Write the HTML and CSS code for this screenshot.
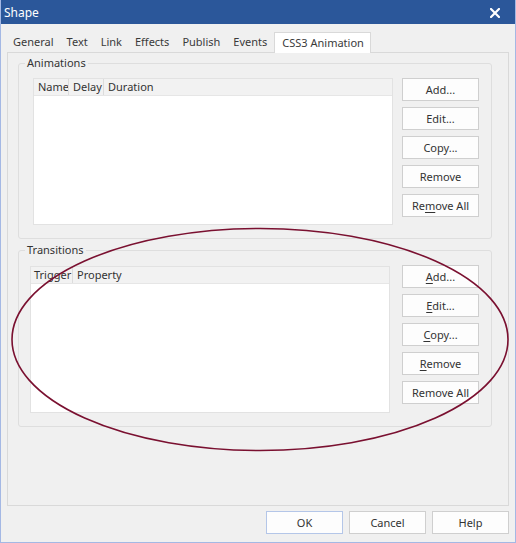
FILE: index.html
```html
<!DOCTYPE html>
<html>
<head>
<meta charset="utf-8">
<link rel="stylesheet" href="styles.css">
</head>
<body>
<div class="window">
  <div class="titlebar">
    <span class="title">Shape</span>
    <svg class="close" width="10" height="10" viewBox="0 0 10 10"><path d="M1 1 L9 9 M9 1 L1 9" stroke="#fff" stroke-width="2.2" stroke-linecap="square"/></svg>
  </div>
  <div class="content">
    <div class="tabs">
      <div class="tab">General</div>
      <div class="tab">Text</div>
      <div class="tab">Link</div>
      <div class="tab">Effects</div>
      <div class="tab">Publish</div>
      <div class="tab">Events</div>
      <div class="tab active">CSS3 Animation</div>
    </div>
    <div class="panel">
      <fieldset class="group group-anim">
        <legend>Animations</legend>
        <div class="group-row">
          <div class="list list-anim">
            <div class="list-head">
              <div class="col col-name">Name</div>
              <div class="col col-delay">Delay</div>
              <div class="col col-fill">Duration</div>
            </div>
          </div>
          <div class="btns">
            <button class="btn">Add...</button>
            <button class="btn">Edit...</button>
            <button class="btn">Copy...</button>
            <button class="btn">Remove</button>
            <button class="btn">Re<u>m</u>ove All</button>
          </div>
        </div>
      </fieldset>
      <fieldset class="group group-trans">
        <legend>Transitions</legend>
        <div class="group-row">
          <div class="list list-trans">
            <div class="list-head">
              <div class="col col-trigger">Trigger</div>
              <div class="col col-fill">Property</div>
            </div>
          </div>
          <div class="btns btns-trans">
            <button class="btn"><u>A</u>dd...</button>
            <button class="btn"><u>E</u>dit...</button>
            <button class="btn"><u>C</u>opy...</button>
            <button class="btn"><u>R</u>emove</button>
            <button class="btn">Remove All</button>
          </div>
        </div>
      </fieldset>
    </div>
    <div class="footer">
      <button class="btn btn-default">OK</button>
      <button class="btn">Cancel</button>
      <button class="btn">Help</button>
    </div>
  </div>
  <svg class="mark" width="516" height="543" viewBox="0 0 516 543">
    <ellipse cx="260" cy="339.5" rx="248" ry="111" fill="none" stroke="#7a1030" stroke-width="1.6"/>
  </svg>
</div>
</body>
</html>
```
FILE: styles.css
```css
* { box-sizing: border-box; }
html, body { margin: 0; padding: 0; background: #f0f0f0; }
body {
  font-family: "Noto Sans", "Liberation Sans", sans-serif;
  font-size: 11px;
  color: #333;
}
.window {
  position: relative;
  width: 516px;
  height: 543px;
  background: #f0f0f0;
  border: 1px solid #a4b8e4;
  border-top: none;
  overflow: hidden;
}
.titlebar {
  height: 24px;
  margin: 0 -1px;
  background: #2b579a;
  display: flex;
  align-items: center;
  justify-content: space-between;
  padding: 0 16px 0 4px;
}
.title {
  color: #fff;
  font-size: 12px;
}
.close { display: block; margin-top: 1px; }
.content {
  padding: 0 6px;
}
.tabs {
  display: flex;
  margin-top: 8px;
  height: 20px;
  align-items: flex-end;
}
.tab {
  padding: 0 6px 0 6px;
  margin-right: 1px;
  line-height: 20px;
  height: 20px;
  color: #3a3a3a;
}
.active {
  background: #fff;
  border: 1px solid #d9d9d9;
  border-bottom: none;
  height: 21px;
  margin-bottom: -1px;
  padding: 0 6px 0 7px;
  margin-left: 0;
  position: relative;
  z-index: 1;
}
.panel {
  height: 454px;
  border: 1px solid #d9d9d9;
  padding: 3px 16px 0 10px;
}
.group {
  margin: 0;
  border: 1px solid #dedede;
  border-radius: 3px;
  padding: 8px 12px 13px 6px;
  min-width: 0;
}
.group legend {
  padding: 0 2px;
  line-height: 14px;
  font-size: 11px;
  color: #333;
}
.group-trans {
  margin-top: 4px;
  padding-top: 9px;
}
.group-row {
  display: flex;
  justify-content: space-between;
  align-items: flex-start;
}
.list {
  width: 360px;
  height: 147px;
  background: #fff;
  border: 1px solid #e2e2e2;
}
.list-anim { margin-left: 8px; }
.list-trans { margin-left: 5px; }
.list-head {
  display: flex;
  height: 17px;
  background: #f2f2f2;
  border-bottom: 1px solid #e6e6e6;
}
.col {
  padding-left: 4px;
  line-height: 16px;
  border-right: 1px solid #dcdcdc;
  color: #333;
  white-space: nowrap;
  overflow: hidden;
}
.col-name { width: 35px; }
.col-delay { width: 35px; }
.col-trigger { width: 42px; padding-left: 3px; }
.col-fill { flex: 1; border-right: none; }
.btns {
  display: flex;
  flex-direction: column;
  gap: 6px;
}
.btns-trans { margin-top: -1px; }
.btn {
  width: 77px;
  height: 23px;
  background: #fdfdfd;
  border: 1px solid #cfcfcf;
  font-family: "Noto Sans", "Liberation Sans", sans-serif;
  font-size: 11px;
  color: #333;
  padding: 0;
  margin: 0;
}
.btn u { text-decoration-thickness: 1px; text-underline-offset: 2px; }
.btn-default { border-color: #b4c6e8; }
.footer {
  display: flex;
  justify-content: flex-end;
  gap: 6px;
  margin-top: 5px;
}
.mark {
  position: absolute;
  left: -1px;
  top: 0;
  pointer-events: none;
}
```
